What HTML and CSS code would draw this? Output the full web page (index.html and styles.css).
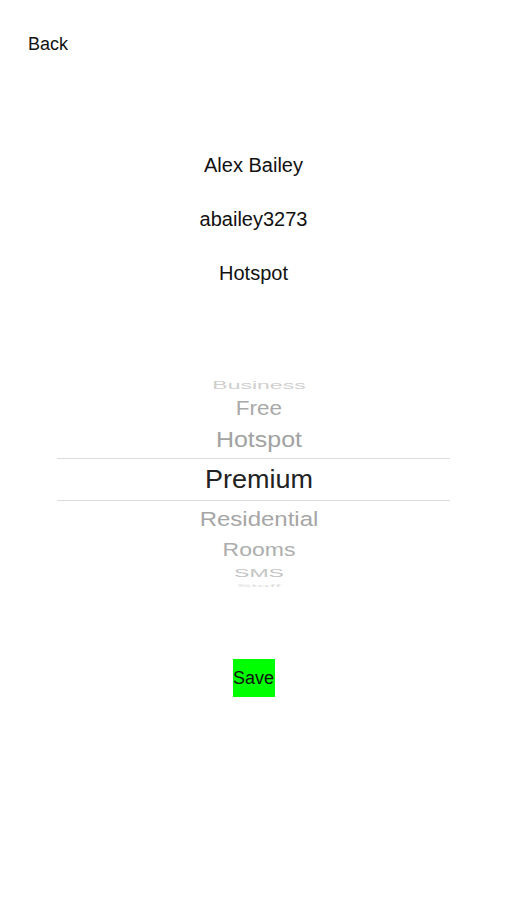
FILE: index.html
```html
<!DOCTYPE html>
<html>
<head>
<meta charset="utf-8">
<link rel="stylesheet" href="styles.css">
</head>
<body>
<div class="screen">
  <header class="topbar">
    <span class="back">Back</span>
  </header>
  <section class="info">
    <div class="label">Alex Bailey</div>
    <div class="label">abailey3273</div>
    <div class="label">Hotspot</div>
  </section>
  <section class="picker">
    <div class="item i-business"><span>Business</span></div>
    <div class="item i-free"><span>Free</span></div>
    <div class="item i-hotspot"><span>Hotspot</span></div>
    <div class="item i-premium"><span>Premium</span></div>
    <div class="item i-residential"><span>Residential</span></div>
    <div class="item i-rooms"><span>Rooms</span></div>
    <div class="item i-sms"><span>SMS</span></div>
    <div class="item i-last"><span>Staff</span></div>
  </section>
  <div class="actions">
    <button class="save">Save</button>
  </div>
</div>
</body>
</html>
```
FILE: styles.css
```css
html, body {
  margin: 0;
  padding: 0;
  background: #ffffff;
}
.screen {
  width: 507px;
  height: 900px;
  font-family: "Liberation Sans", Arial, sans-serif;
  color: #111111;
  display: flex;
  flex-direction: column;
}
.topbar {
  padding: 33px 28px 0;
  height: 22px;
}
.back {
  font-size: 18px;
  line-height: 22px;
  color: #111111;
}
.info {
  margin-top: 98px;
  display: flex;
  flex-direction: column;
  align-items: center;
  gap: 30px;
}
.label {
  font-size: 20px;
  line-height: 24px;
  color: #111111;
}
.picker {
  margin: 88px 57px 0;
  display: flex;
  flex-direction: column;
}
.item {
  display: flex;
  align-items: center;
  justify-content: center;
  padding-left: 11px;
  overflow: visible;
}
.item span {
  display: inline-block;
  white-space: nowrap;
  line-height: 1;
}
.i-business { height: 24px; }
.i-business span { font-size: 23px; color: #cfcfcf; transform: scaleY(0.48); }
.i-free { height: 24px; }
.i-free span { font-size: 22.5px; color: #a8a8a8; transform: scaleY(0.87); }
.i-hotspot { height: 37px; }
.i-hotspot span { font-size: 25px; color: #a2a2a2; transform: scaleY(0.9); }
.i-premium {
  height: 41px;
  border-top: 1px solid #dcdcdc;
  border-bottom: 1px solid #dcdcdc;
}
.i-premium span { font-size: 27px; color: #222222; transform: scaleY(0.95); }
.i-residential { height: 35px; }
.i-residential span { font-size: 24px; color: #a6a6a6; transform: scaleY(0.87); }
.i-rooms { height: 29px; }
.i-rooms span { font-size: 23px; color: #adadad; transform: scaleY(0.79); }
.i-sms { height: 16px; }
.i-sms span { font-size: 23px; color: #c4c4c4; transform: scaleY(0.48); }
.i-last { height: 10px; }
.i-last span { font-size: 22px; color: #dedede; transform: scaleY(0.18); }
.actions {
  margin-top: 68px;
  display: flex;
  justify-content: center;
}
.save {
  width: 42px;
  height: 38px;
  padding: 0;
  margin: 0;
  border: none;
  background: #00ff00;
  color: #111111;
  font-family: "Liberation Sans", Arial, sans-serif;
  font-size: 18px;
  line-height: 38px;
  text-align: center;
}
```
